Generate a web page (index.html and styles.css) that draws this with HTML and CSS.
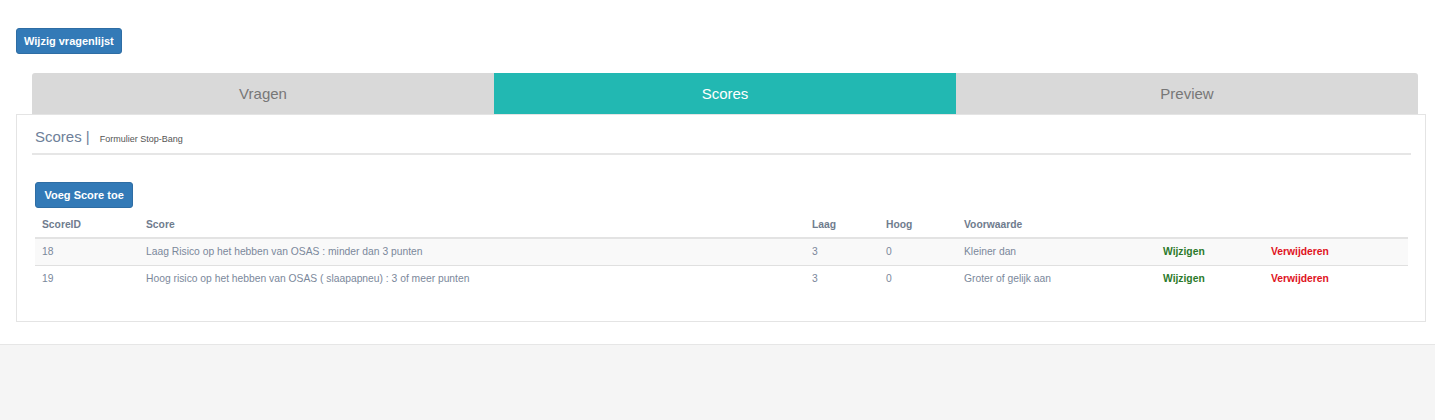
FILE: index.html
```html
<!DOCTYPE html>
<html lang="nl">
<head>
<meta charset="utf-8">
<title>Scores</title>
<link rel="stylesheet" href="styles.css">
</head>
<body>
<div class="page">
  <div class="toolbar">
    <button class="btn">Wijzig vragenlijst</button>
  </div>
  <div class="tabs">
    <div class="tab">Vragen</div>
    <div class="tab active">Scores</div>
    <div class="tab">Preview</div>
  </div>
  <div class="panel">
    <div class="title"><span class="title-main">Scores |</span><span class="title-sub">Formulier Stop-Bang</span></div>
    <div class="rule"></div>
    <div class="actions"><button class="btn btn-add">Voeg Score toe</button></div>
    <table class="grid">
      <colgroup>
        <col class="c-id"><col class="c-score"><col class="c-laag"><col class="c-hoog"><col class="c-voor"><col class="c-edit"><col class="c-del">
      </colgroup>
      <thead>
        <tr><th>ScoreID</th><th>Score</th><th>Laag</th><th>Hoog</th><th>Voorwaarde</th><th></th><th></th></tr>
      </thead>
      <tbody>
        <tr class="odd"><td>18</td><td>Laag Risico op het hebben van OSAS : minder dan 3 punten</td><td>3</td><td>0</td><td>Kleiner dan</td><td><a class="edit">Wijzigen</a></td><td><a class="del">Verwijderen</a></td></tr>
        <tr><td>19</td><td>Hoog risico op het hebben van OSAS ( slaapapneu) : 3 of meer punten</td><td>3</td><td>0</td><td>Groter of gelijk aan</td><td><a class="edit">Wijzigen</a></td><td><a class="del">Verwijderen</a></td></tr>
      </tbody>
    </table>
  </div>
</div>
<div class="footer"></div>
</body>
</html>
```
FILE: styles.css
```css
* { box-sizing: border-box; }
html, body { margin: 0; padding: 0; background: #ffffff; }
body { font-family: "Liberation Sans", Arial, sans-serif; color: #6b7a90; }
.page { padding: 28px 9px 22px 16px; }
.toolbar { display: flex; }
.btn {
  font-family: "Liberation Sans", Arial, sans-serif;
  font-weight: bold;
  font-size: 11px;
  color: #fff;
  background: #337ab7;
  border: 1px solid #2e6da4;
  border-radius: 3px;
  height: 26px;
  padding: 0 7px;
  line-height: 24px;
  cursor: pointer;
}
.btn-add { padding: 0 8.5px; }
.tabs {
  display: flex;
  margin: 19px 8px 0 16px;
  height: 41px;
}
.tab {
  flex: 1;
  background: #d9d9d9;
  color: #777;
  font-size: 15px;
  display: flex;
  align-items: center;
  justify-content: center;
}
.tab:first-child { border-top-left-radius: 3px; }
.tab:last-child { border-top-right-radius: 3px; }
.tab.active { background: #22b8b2; color: #fff; }
.panel {
  border: 1px solid #e4e4e4;
  padding: 13px 14px 29px 15px;
}
.title { display: flex; align-items: baseline; padding-left: 3px; height: 23px; }
.title-main { font-size: 15px; color: #6e7f99; }
.title-sub { font-size: 9px; color: #555; margin-left: 10px; }
.rule { height: 2px; background: #e6e6e6; margin-top: 2px; }
.actions { padding: 27px 0 0 3px; }
.grid {
  margin: 7px 3px 0 3px;
  width: calc(100% - 6px);
  border-collapse: collapse;
  table-layout: fixed;
  font-size: 10.3px;
}
.c-id { width: 104px; }
.c-score { width: 666px; }
.c-laag { width: 74px; }
.c-hoog { width: 78px; }
.c-voor { width: 199px; }
.c-edit { width: 108px; }
.grid th {
  text-align: left;
  font-weight: bold;
  color: #6f7c8e;
  padding: 0 7px 4px 7px;
  height: 23px;
  border-bottom: 2px solid #e3e3e3;
}
.grid td {
  padding: 0 7px;
  height: 27px;
  color: #7b889b;
  border-top: 1px solid #e0e0e0;
  white-space: nowrap;
}
.grid thead + tbody tr:first-child td { border-top: 0; }
.grid tr.odd td { background: #f9f9f9; }
.edit { color: #2b7a2b; font-weight: bold; }
.del { color: #e0121c; font-weight: bold; }
.footer {
  height: 77px;
  background: #f5f5f5;
  border-top: 1px solid #e6e6e6;
}
```
